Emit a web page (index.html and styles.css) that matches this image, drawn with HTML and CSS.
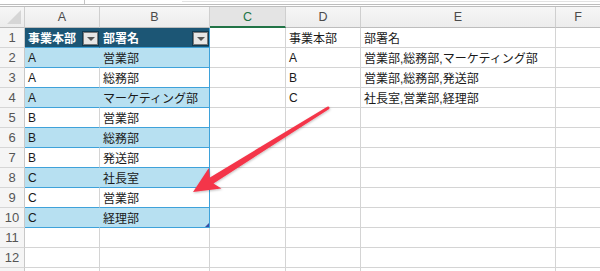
FILE: index.html
```html
<!DOCTYPE html>
<html lang="ja">
<head>
<meta charset="utf-8">
<title>部署一覧</title>
<link rel="stylesheet" href="styles.css">
</head>
<body>
<div class="sheet">
  <div class="topbar">
    <div class="namebox"></div>
    <div class="gap"></div>
    <div class="fx"></div>
  </div>
  <div class="grid">
    <!-- column headers -->
    <div class="corner"><span class="tri"></span></div>
    <div class="ch">A</div>
    <div class="ch">B</div>
    <div class="ch sel">C</div>
    <div class="ch">D</div>
    <div class="ch">E</div>
    <div class="ch last">F</div>

    <!-- row 1 -->
    <div class="rh">1</div>
    <div class="c t th a">事業本部<span class="dd"></span></div>
    <div class="c t th b">部署名<span class="dd"></span></div>
    <div class="c"></div>
    <div class="c">事業本部</div>
    <div class="c">部署名</div>
    <div class="c last"></div>

    <!-- row 2 -->
    <div class="rh">2</div>
    <div class="c t band a">A</div>
    <div class="c t band b">営業部</div>
    <div class="c"></div>
    <div class="c">A</div>
    <div class="c">営業部,総務部,マーケティング部</div>
    <div class="c last"></div>

    <!-- row 3 -->
    <div class="rh">3</div>
    <div class="c t a">A</div>
    <div class="c t b">総務部</div>
    <div class="c"></div>
    <div class="c">B</div>
    <div class="c">営業部,総務部,発送部</div>
    <div class="c last"></div>

    <!-- row 4 -->
    <div class="rh">4</div>
    <div class="c t band a">A</div>
    <div class="c t band b">マーケティング部</div>
    <div class="c"></div>
    <div class="c">C</div>
    <div class="c">社長室,営業部,経理部</div>
    <div class="c last"></div>

    <!-- row 5 -->
    <div class="rh">5</div>
    <div class="c t a">B</div>
    <div class="c t b">営業部</div>
    <div class="c"></div>
    <div class="c"></div>
    <div class="c"></div>
    <div class="c last"></div>

    <!-- row 6 -->
    <div class="rh">6</div>
    <div class="c t band a">B</div>
    <div class="c t band b">総務部</div>
    <div class="c"></div>
    <div class="c"></div>
    <div class="c"></div>
    <div class="c last"></div>

    <!-- row 7 -->
    <div class="rh">7</div>
    <div class="c t a">B</div>
    <div class="c t b">発送部</div>
    <div class="c"></div>
    <div class="c"></div>
    <div class="c"></div>
    <div class="c last"></div>

    <!-- row 8 -->
    <div class="rh">8</div>
    <div class="c t band a">C</div>
    <div class="c t band b">社長室</div>
    <div class="c"></div>
    <div class="c"></div>
    <div class="c"></div>
    <div class="c last"></div>

    <!-- row 9 -->
    <div class="rh">9</div>
    <div class="c t a">C</div>
    <div class="c t b">営業部</div>
    <div class="c"></div>
    <div class="c"></div>
    <div class="c"></div>
    <div class="c last"></div>

    <!-- row 10 -->
    <div class="rh">10</div>
    <div class="c t band a">C</div>
    <div class="c t band b end">経理部<span class="handle"></span></div>
    <div class="c"></div>
    <div class="c"></div>
    <div class="c"></div>
    <div class="c last"></div>

    <!-- row 11 -->
    <div class="rh">11</div>
    <div class="c"></div>
    <div class="c"></div>
    <div class="c"></div>
    <div class="c"></div>
    <div class="c"></div>
    <div class="c last"></div>

    <!-- row 12 -->
    <div class="rh">12</div>
    <div class="c"></div>
    <div class="c"></div>
    <div class="c"></div>
    <div class="c"></div>
    <div class="c"></div>
    <div class="c last"></div>

    <!-- top edge of the next row, label scrolled out of view -->
    <div class="rh"></div>
    <div class="c"></div>
    <div class="c"></div>
    <div class="c"></div>
    <div class="c"></div>
    <div class="c"></div>
    <div class="c last"></div>
  </div>

  <!-- annotation arrow -->
  <svg class="arrow" width="600" height="271" viewBox="0 0 600 271">
    <defs>
      <filter id="shade" x="-20%" y="-20%" width="140%" height="140%">
        <feDropShadow dx="0.5" dy="1" stdDeviation="1" flood-color="#000" flood-opacity="0.25"/>
      </filter>
    </defs>
    <path filter="url(#shade)" fill="#f4364a"
      d="M327.2 106.7 Q328.8 105.8 329.5 107.5 Q329.6 108.9 328.8 109.3
         L213.5 183.4 L221.4 188.5 L193 192 L208.8 168.1 L209.9 177.4 Z"/>
  </svg>
</div>
</body>
</html>
```

FILE: styles.css
```css
html, body {
  margin: 0;
  padding: 0;
  background: #ffffff;
}

.sheet {
  position: relative;
  width: 600px;
  height: 271px;
  overflow: hidden;
  font-family: "Liberation Sans", "Noto Sans CJK JP", sans-serif;
  font-size: 12px;
  color: #1a1a1a;
}

/* formula bar remnant */
.topbar {
  display: flex;
  height: 4px;
  border-bottom: 3px double #bdbdbd;
}
.namebox {
  width: 84px;
  border-right: 1px solid #c4c4c4;
}
.gap {
  width: 97px;
}
.fx {
  flex: 1;
  height: 1px;
  border-bottom: 1px solid #e2e2e2;
}

/* sheet grid */
.grid {
  display: grid;
  grid-template-columns: 25px 75px 110px 76px 75px 195px 44px;
  grid-template-rows: 21px repeat(13, 20px);
}

.corner,
.ch {
  box-sizing: border-box;
  background: linear-gradient(#f6f6f6, #ececec);
  border-right: 1px solid #cfcfcf;
  border-bottom: 1px solid #bdbdbd;
}
.corner {
  position: relative;
}
.tri {
  position: absolute;
  right: 3px;
  bottom: 3px;
  width: 0;
  height: 0;
  border-left: 14px solid transparent;
  border-bottom: 14px solid #d6d6d6;
}
.ch {
  display: flex;
  align-items: center;
  justify-content: center;
  font-size: 12.5px;
  color: #4a4a4a;
}
.ch.sel {
  background: #e4e4e4;
  color: #217346;
  border-bottom: 2px solid #217346;
}
.ch.last {
  border-right: none;
}

.rh {
  box-sizing: border-box;
  display: flex;
  align-items: center;
  justify-content: center;
  font-size: 13px;
  color: #555555;
  background: #f5f5f5;
  border-right: 1px solid #c8c8c8;
  border-bottom: 1px solid #d6d6d6;
}

.c {
  box-sizing: border-box;
  display: flex;
  align-items: center;
  padding-left: 3px;
  white-space: nowrap;
  overflow: hidden;
  border-right: 1px solid #d4d4d4;
  border-bottom: 1px solid #d4d4d4;
}
.c.last {
  border-right: none;
}

/* formatted table in A1:B10 */
.c.t {
  position: relative;
  overflow: visible;
  border-bottom-color: #3ea2da;
}
.c.t.b {
  border-right-color: #3ea2da;
}
.c.band {
  background: #b7e0f1;
}
.c.band.a {
  border-right-color: #b7e0f1;
}
.c.th {
  background: #1c5675;
  color: #ffffff;
  font-weight: bold;
  border-bottom-color: #3ea2da;
}
.c.th.a {
  border-right-color: #1c5675;
}

/* filter dropdown buttons */
.dd {
  position: absolute;
  right: 1px;
  top: 4px;
  width: 15px;
  height: 13px;
  box-sizing: border-box;
  background: #e6e6e6;
  border: 1px solid #7a7a7a;
  outline: 1px solid #0f3a52;
}
.dd::after {
  content: "";
  position: absolute;
  left: 3px;
  top: 4px;
  border-left: 4px solid transparent;
  border-right: 4px solid transparent;
  border-top: 4px solid #555555;
}

/* table resize handle */
.handle {
  position: absolute;
  right: 0;
  bottom: 0;
  width: 0;
  height: 0;
  border-left: 4px solid transparent;
  border-bottom: 4px solid #3a4ea3;
}

.arrow {
  position: absolute;
  left: 0;
  top: 0;
  pointer-events: none;
}
```
